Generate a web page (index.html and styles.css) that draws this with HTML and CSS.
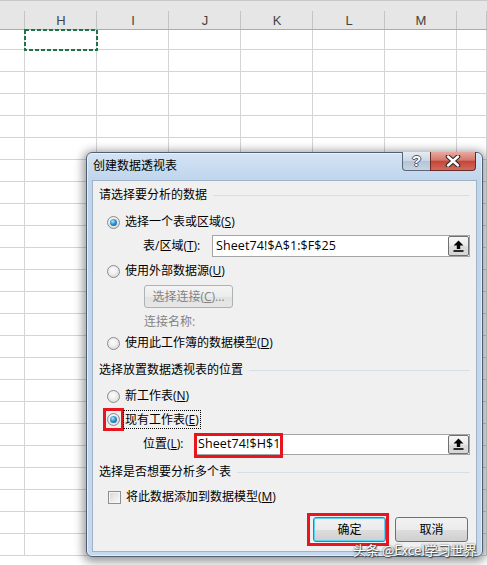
FILE: index.html
```html
<!DOCTYPE html>
<html lang="zh-CN">
<head>
    <meta charset="UTF-8">
    <title>创建数据透视表</title>
    <link rel="stylesheet" href="styles.css">
</head>
<body>
    <div class="sheet">
        <div class="head">
            <div class="col"></div>
            <div class="col">H</div>
            <div class="col">I</div>
            <div class="col">J</div>
            <div class="col">K</div>
            <div class="col">L</div>
            <div class="col">M</div>
            <div class="col"></div>
        </div>
        <div class="row first"><div></div><div class="sel"><svg class="marquee" width="74" height="22"><rect x="1" y="1" width="72" height="20" fill="none" stroke="#217346" stroke-width="2" stroke-dasharray="4 2"/></svg></div><div></div><div></div><div></div><div></div><div></div><div></div></div>
        <div class="row"><div></div><div></div><div></div><div></div><div></div><div></div><div></div><div></div></div>
        <div class="row"><div></div><div></div><div></div><div></div><div></div><div></div><div></div><div></div></div>
        <div class="row"><div></div><div></div><div></div><div></div><div></div><div></div><div></div><div></div></div>
        <div class="row"><div></div><div></div><div></div><div></div><div></div><div></div><div></div><div></div></div>
        <div class="row"><div></div><div></div><div></div><div></div><div></div><div></div><div></div><div></div></div>
        <div class="row"><div></div><div></div><div></div><div></div><div></div><div></div><div></div><div></div></div>
        <div class="row"><div></div><div></div><div></div><div></div><div></div><div></div><div></div><div></div></div>
        <div class="row"><div></div><div></div><div></div><div></div><div></div><div></div><div></div><div></div></div>
        <div class="row"><div></div><div></div><div></div><div></div><div></div><div></div><div></div><div></div></div>
        <div class="row"><div></div><div></div><div></div><div></div><div></div><div></div><div></div><div></div></div>
        <div class="row"><div></div><div></div><div></div><div></div><div></div><div></div><div></div><div></div></div>
        <div class="row"><div></div><div></div><div></div><div></div><div></div><div></div><div></div><div></div></div>
        <div class="row"><div></div><div></div><div></div><div></div><div></div><div></div><div></div><div></div></div>
        <div class="row"><div></div><div></div><div></div><div></div><div></div><div></div><div></div><div></div></div>
        <div class="row"><div></div><div></div><div></div><div></div><div></div><div></div><div></div><div></div></div>
        <div class="row"><div></div><div></div><div></div><div></div><div></div><div></div><div></div><div></div></div>
        <div class="row"><div></div><div></div><div></div><div></div><div></div><div></div><div></div><div></div></div>
        <div class="row"><div></div><div></div><div></div><div></div><div></div><div></div><div></div><div></div></div>
        <div class="row"><div></div><div></div><div></div><div></div><div></div><div></div><div></div><div></div></div>
        <div class="row"><div></div><div></div><div></div><div></div><div></div><div></div><div></div><div></div></div>
        <div class="row"><div></div><div></div><div></div><div></div><div></div><div></div><div></div><div></div></div>
        <div class="row"><div></div><div></div><div></div><div></div><div></div><div></div><div></div><div></div></div>
        <div class="row"><div></div><div></div><div></div><div></div><div></div><div></div><div></div><div></div></div>
    </div>

    <div class="dialog">
        <div class="titlebar">
            <div class="title">创建数据透视表</div>
            <div class="caption-btns">
                <div class="cap help">?</div>
                <div class="cap close">
                    <svg width="16" height="12" viewBox="0 0 16 12"><path d="M3 1.5 L13 10.5 M13 1.5 L3 10.5" stroke="#2b2b2b" stroke-width="4.6" stroke-linecap="round"/><path d="M3 1.5 L13 10.5 M13 1.5 L3 10.5" stroke="#fff" stroke-width="2.4" stroke-linecap="round"/></svg>
                </div>
            </div>
        </div>

        <div class="client">
            <div class="group g1"><span>请选择要分析的数据</span><i class="rule"></i></div>

            <div class="opt o1"><span class="radio on"></span><span class="lab">选择一个表或区域(<u>S</u>)</span></div>

            <div class="field f1">
                <span class="flabel">表/区域(<u>T</u>):</span>
                <div class="input">
                    <span class="val">Sheet74!$A$1:$F$25</span>
                    <span class="pick"><svg width="11" height="12" viewBox="0 0 11 12"><path d="M5.5 0.5 L10.5 5.5 H7.2 V9 H3.8 V5.5 H0.5 Z" fill="#000"/><rect x="0.5" y="10.2" width="10" height="1.6" fill="#000"/></svg></span>
                </div>
            </div>

            <div class="opt o2"><span class="radio"></span><span class="lab">使用外部数据源(<u>U</u>)</span></div>

            <div class="conn"><span class="btn-dis">选择连接(<u>C</u>)...</span></div>

            <div class="conn-name">连接名称:</div>

            <div class="opt o3"><span class="radio"></span><span class="lab">使用此工作簿的数据模型(<u>D</u>)</span></div>

            <div class="group g2"><span>选择放置数据透视表的位置</span><i class="rule"></i></div>

            <div class="opt o4"><span class="radio"></span><span class="lab">新工作表(<u>N</u>)</span></div>

            <div class="opt o5"><span class="red-box"><span class="radio on"></span></span><span class="lab focus">现有工作表(<u>E</u>)</span></div>

            <div class="field f2">
                <span class="flabel">位置(<u>L</u>):</span>
                <div class="input">
                    <span class="val">Sheet74!$H$1</span>
                    <span class="mark"></span>
                    <span class="pick"><svg width="11" height="12" viewBox="0 0 11 12"><path d="M5.5 0.5 L10.5 5.5 H7.2 V9 H3.8 V5.5 H0.5 Z" fill="#000"/><rect x="0.5" y="10.2" width="10" height="1.6" fill="#000"/></svg></span>
                </div>
            </div>

            <div class="group g3"><span>选择是否想要分析多个表</span><i class="rule"></i></div>

            <div class="opt o6"><span class="check"></span><span class="lab">将此数据添加到数据模型(<u>M</u>)</span></div>

            <div class="actions">
                <span class="btn-box"><span class="btn default">确定</span></span>
                <span class="btn">取消</span>
            </div>
        </div>
    </div>

    <div class="watermark">头条 @Excel学习世界</div>
</body>
</html>
```

FILE: styles.css
```css
* {
    box-sizing: border-box;
}

body {
    margin: 0;
    width: 487px;
    height: 565px;
    overflow: hidden;
    position: relative;
    background: #fff;
    font-family: "Liberation Sans", Arial, sans-serif;
}

/* spreadsheet behind the dialog */

.head {
    display: grid;
    grid-template-columns: 25px repeat(6, 72px) 1fr;
    height: 30px;
    background: #e6e6e6;
    border-top: 1px solid #c8c8c8;
    border-bottom: 1px solid #ababab;
}

.col {
    padding-top: 13px;
    line-height: 14px;
    font-size: 13px;
    color: #444;
    text-align: center;
    background: linear-gradient(#c4c4c4, #c4c4c4) right bottom / 1px 18px no-repeat;
}

.row {
    display: grid;
    grid-template-columns: 25px repeat(6, 72px) 1fr;
    height: 22px;
}

.row.first {
    height: 20px;
}

.row div {
    border-right: 1px solid #d4d4d4;
    border-bottom: 1px solid #d4d4d4;
}

.sel {
    position: relative;
}

.marquee {
    position: absolute;
    left: -1px;
    top: -1px;
}

/* dialog window */

.dialog {
    position: absolute;
    left: 86px;
    top: 152px;
    width: 397px;
    height: 405px;
    display: flex;
    flex-direction: column;
    padding: 0 5px 4px;
    border: 1px solid #4f5e70;
    border-radius: 6px;
    background: linear-gradient(#d3e3f4, #bfd5ec 28px, #c4d9ee);
    box-shadow: inset 0 0 0 1px rgba(255, 255, 255, 0.55), 0 2px 10px 3px rgba(0, 0, 0, 0.4);
    font-family: "Open Sans", "Noto Sans CJK SC", sans-serif;
    font-size: 12px;
    color: #000;
}

.titlebar {
    height: 27px;
    display: flex;
    justify-content: space-between;
    align-items: flex-start;
}

.title {
    padding: 5px 0 0 1px;
    line-height: 16px;
}

.caption-btns {
    display: flex;
    margin-top: -1px;
    margin-right: 1px;
}

.cap {
    height: 19px;
    border: 1px solid #5a6878;
    border-top: none;
    display: flex;
    align-items: center;
    justify-content: center;
}

.help {
    width: 28px;
    border-right: none;
    border-radius: 0 0 0 4px;
    background: linear-gradient(#e6ecf3, #cbd6e3 50%, #b4c4d6 51%, #c6d4e3);
    color: #fff;
    font-family: "Liberation Sans", Arial, sans-serif;
    font-weight: bold;
    font-size: 15px;
    line-height: 16px;
    text-shadow: 1px 0 0 #555, -1px 0 0 #555, 0 1px 0 #555, 0 -1px 0 #555;
}

.close {
    width: 46px;
    border-color: #6a2b26;
    border-radius: 0 0 4px 0;
    background: linear-gradient(#e9a99f, #d7786c 45%, #c4463a 52%, #d26a5c);
}

.client {
    flex: 1;
    display: flex;
    flex-direction: column;
    background: #f0f0f0;
    border: 1px solid #9fb2c7;
    line-height: 22px;
}

/* group headings */

.group {
    display: flex;
    align-items: center;
    height: 22px;
    padding-left: 6px;
}

.rule {
    flex: 1;
    height: 1px;
    margin: 0 6px;
    background: #d5dfe5;
}

.g1 { margin-top: 3px; }
.g2 { margin-top: 5px; }
.g3 { margin-top: 6px; }

/* radio / checkbox rows */

.opt {
    display: flex;
    align-items: center;
    height: 22px;
    padding-left: 14px;
}

.o1 { margin-top: 5px; }
.o2 { margin-top: 3px; }
.o3 { margin-top: 1px; }
.o4 { margin-top: 4px; }
.o5 { margin-top: 1px; padding-left: 10px; }
.o6 { margin-top: 3px; padding-left: 15px; }

.lab {
    margin-left: 5px;
}

.lab.focus {
    margin-left: -1px;
    padding: 0 1px;
    line-height: 17px;
    border: 1px dotted #000;
}

.radio {
    position: relative;
    flex: none;
    width: 13px;
    height: 13px;
    border-radius: 50%;
    border: 1px solid #8b8b8b;
    background: radial-gradient(circle at 45% 40%, #fdfdfd 0, #f2f2f2 35%, #cfcfcf 100%);
}

.radio.on::after {
    content: "";
    position: absolute;
    left: 2px;
    top: 2px;
    width: 7px;
    height: 7px;
    border-radius: 50%;
    background: radial-gradient(circle at 40% 35%, #b4e6fd 0, #2f93cf 45%, #0c4a74 100%);
}

.red-box {
    display: flex;
    align-items: center;
    justify-content: center;
    width: 21px;
    height: 23px;
    border: 3px solid #e8141e;
}

.check {
    flex: none;
    width: 13px;
    height: 13px;
    border: 1px solid #8e8f8f;
    background: linear-gradient(135deg, #d6d6d6, #fbfbfb);
    box-shadow: inset 0 0 0 1px #f4f4f4;
}

/* label + range input rows */

.field {
    display: flex;
    align-items: center;
    height: 22px;
    padding-left: 50px;
}

.f1 { margin-top: 2px; }
.f2 { margin-top: 3px; }

.f1 .flabel { width: 69px; }
.f2 .flabel { width: 51px; }

.input {
    position: relative;
    display: flex;
    align-items: center;
    height: 22px;
    border: 1px solid #a5a5a5;
    background: #fff;
    padding-left: 3px;
}

.f1 .input { width: 258px; }
.f2 .input { width: 276px; height: 21px; }

.val {
    flex: 1;
    font-size: 12.5px;
    letter-spacing: 0.1px;
}

.pick {
    width: 21px;
    height: 20px;
    display: flex;
    align-items: center;
    justify-content: center;
    border: 1px solid #707070;
    border-radius: 2px;
    background: linear-gradient(#f7f7f7, #e9e9e9 50%, #dcdcdc 51%, #d6d6d6);
}

.f2 .pick { height: 19px; }

.mark {
    position: absolute;
    left: -1px;
    top: -2px;
    width: 89px;
    height: 25px;
    border: 3px solid #e8141e;
}

/* external connection */

.conn {
    margin-top: 3px;
    padding-left: 51px;
    height: 23px;
}

.btn-dis {
    display: block;
    width: 89px;
    height: 23px;
    line-height: 21px;
    text-align: center;
    color: #838383;
    border: 1px solid #adb2b5;
    border-radius: 3px;
    background: linear-gradient(#f4f4f4, #ececec 50%, #e2e2e2 51%, #e6e6e6);
}

.conn-name {
    margin-top: 5px;
    height: 18px;
    line-height: 18px;
    padding-left: 51px;
    color: #838383;
}

/* OK / Cancel */

.actions {
    display: flex;
    justify-content: flex-end;
    align-items: center;
    gap: 6px;
    margin-top: 5px;
    padding-right: 8px;
}

.btn-box {
    display: block;
    padding: 1px 0 1px 3px;
    border: 3px solid #e8141e;
}

.btn {
    display: block;
    width: 73px;
    height: 25px;
    line-height: 23px;
    text-align: center;
    border: 1px solid #707070;
    border-radius: 3px;
    background: linear-gradient(#f2f2f2, #ebebeb 50%, #dddddd 51%, #cfcfcf);
}

.btn.default {
    border-color: #3c7fb1;
    box-shadow: inset 0 0 0 1px #5fd0f6;
}

.watermark {
    position: absolute;
    left: 353px;
    top: 542px;
    font-family: "Noto Sans CJK SC", sans-serif;
    font-size: 13px;
    line-height: 16px;
    color: #fff;
    text-shadow: 0 0 2px #333, 1px 1px 1px #444;
}
```
